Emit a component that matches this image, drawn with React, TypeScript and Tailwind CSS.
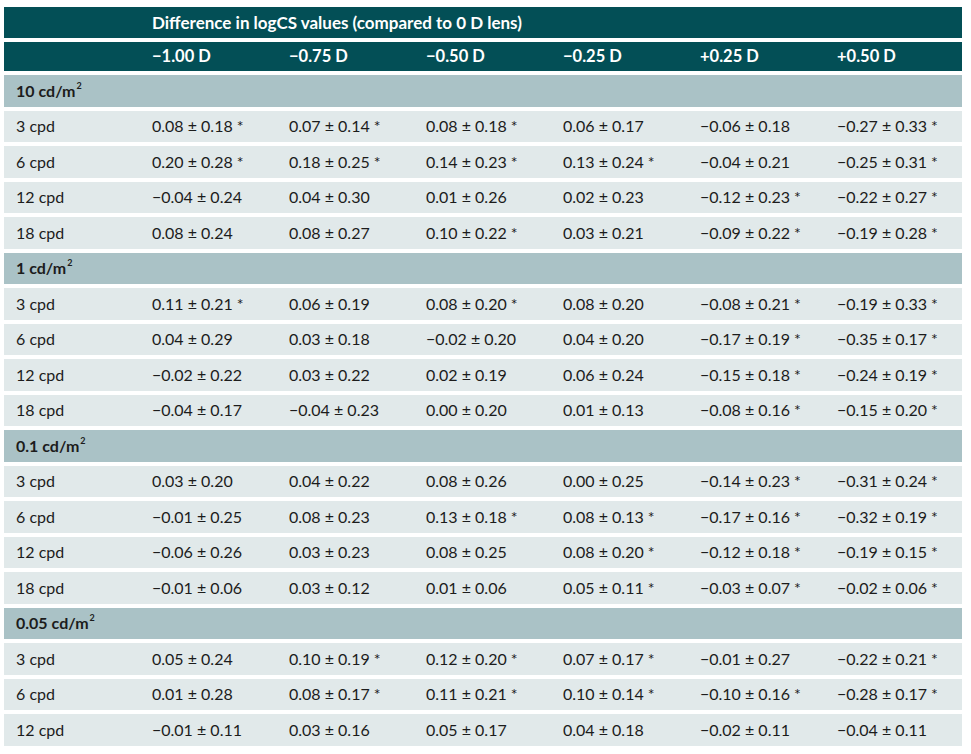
const COLS = ['−1.00 D', '−0.75 D', '−0.50 D', '−0.25 D', '+0.25 D', '+0.50 D'];

type Section = { title: string; rows: [string, string[]][] };

const DATA: Section[] = [
  {
    title: '10',
    rows: [
      ['3 cpd', ['0.08 ± 0.18 *', '0.07 ± 0.14 *', '0.08 ± 0.18 *', '0.06 ± 0.17', '−0.06 ± 0.18', '−0.27 ± 0.33 *']],
      ['6 cpd', ['0.20 ± 0.28 *', '0.18 ± 0.25 *', '0.14 ± 0.23 *', '0.13 ± 0.24 *', '−0.04 ± 0.21', '−0.25 ± 0.31 *']],
      ['12 cpd', ['−0.04 ± 0.24', '0.04 ± 0.30', '0.01 ± 0.26', '0.02 ± 0.23', '−0.12 ± 0.23 *', '−0.22 ± 0.27 *']],
      ['18 cpd', ['0.08 ± 0.24', '0.08 ± 0.27', '0.10 ± 0.22 *', '0.03 ± 0.21', '−0.09 ± 0.22 *', '−0.19 ± 0.28 *']],
    ],
  },
  {
    title: '1',
    rows: [
      ['3 cpd', ['0.11 ± 0.21 *', '0.06 ± 0.19', '0.08 ± 0.20 *', '0.08 ± 0.20', '−0.08 ± 0.21 *', '−0.19 ± 0.33 *']],
      ['6 cpd', ['0.04 ± 0.29', '0.03 ± 0.18', '−0.02 ± 0.20', '0.04 ± 0.20', '−0.17 ± 0.19 *', '−0.35 ± 0.17 *']],
      ['12 cpd', ['−0.02 ± 0.22', '0.03 ± 0.22', '0.02 ± 0.19', '0.06 ± 0.24', '−0.15 ± 0.18 *', '−0.24 ± 0.19 *']],
      ['18 cpd', ['−0.04 ± 0.17', '−0.04 ± 0.23', '0.00 ± 0.20', '0.01 ± 0.13', '−0.08 ± 0.16 *', '−0.15 ± 0.20 *']],
    ],
  },
  {
    title: '0.1',
    rows: [
      ['3 cpd', ['0.03 ± 0.20', '0.04 ± 0.22', '0.08 ± 0.26', '0.00 ± 0.25', '−0.14 ± 0.23 *', '−0.31 ± 0.24 *']],
      ['6 cpd', ['−0.01 ± 0.25', '0.08 ± 0.23', '0.13 ± 0.18 *', '0.08 ± 0.13 *', '−0.17 ± 0.16 *', '−0.32 ± 0.19 *']],
      ['12 cpd', ['−0.06 ± 0.26', '0.03 ± 0.23', '0.08 ± 0.25', '0.08 ± 0.20 *', '−0.12 ± 0.18 *', '−0.19 ± 0.15 *']],
      ['18 cpd', ['−0.01 ± 0.06', '0.03 ± 0.12', '0.01 ± 0.06', '0.05 ± 0.11 *', '−0.03 ± 0.07 *', '−0.02 ± 0.06 *']],
    ],
  },
  {
    title: '0.05',
    rows: [
      ['3 cpd', ['0.05 ± 0.24', '0.10 ± 0.19 *', '0.12 ± 0.20 *', '0.07 ± 0.17 *', '−0.01 ± 0.27', '−0.22 ± 0.21 *']],
      ['6 cpd', ['0.01 ± 0.28', '0.08 ± 0.17 *', '0.11 ± 0.21 *', '0.10 ± 0.14 *', '−0.10 ± 0.16 *', '−0.28 ± 0.17 *']],
      ['12 cpd', ['−0.01 ± 0.11', '0.03 ± 0.16', '0.05 ± 0.17', '0.04 ± 0.18', '−0.02 ± 0.11', '−0.04 ± 0.11']],
    ],
  },
];

const row = 'grid grid-cols-[136px_repeat(6,137px)] items-center';

export default function App() {
  return (
    <div className="bg-white w-[971px] h-[754px] pt-[7px] pl-[4px] font-['Lato',sans-serif] text-[16px] text-[#1c1c1c]">
      <div className="w-[958px] flex flex-col gap-[4px]">
        <div className={`${row} h-[31px] bg-[#034f56] text-white font-bold text-[17px]`}>
          <div />
          <div className="col-span-6 pl-[12px]">Difference in logCS values (compared to 0 D lens)</div>
        </div>
        <div className={`${row} h-[29px] bg-[#034f56] text-white font-bold text-[16.5px]`}>
          <div />
          {COLS.map((c) => (
            <div key={c} className="pl-[12px]">{c}</div>
          ))}
        </div>
        {DATA.map((s) => (
          <div key={s.title} className="flex flex-col gap-[4px]">
            <div className="h-[31.5px] bg-[#aac2c6] flex items-center pl-[12px] font-bold">
              {s.title} cd/m<sup className="text-[9px] -top-[5px] ml-[1px]">2</sup>
            </div>
            {s.rows.map(([label, vals]) => (
              <div key={label} className={`${row} h-[31.5px] bg-[#e1e9ea]`}>
                <div className="pl-[12px]">{label}</div>
                {vals.map((v, i) => (
                  <div key={i} className="pl-[12px] whitespace-pre">{v}</div>
                ))}
              </div>
            ))}
          </div>
        ))}
      </div>
    </div>
  );
}
